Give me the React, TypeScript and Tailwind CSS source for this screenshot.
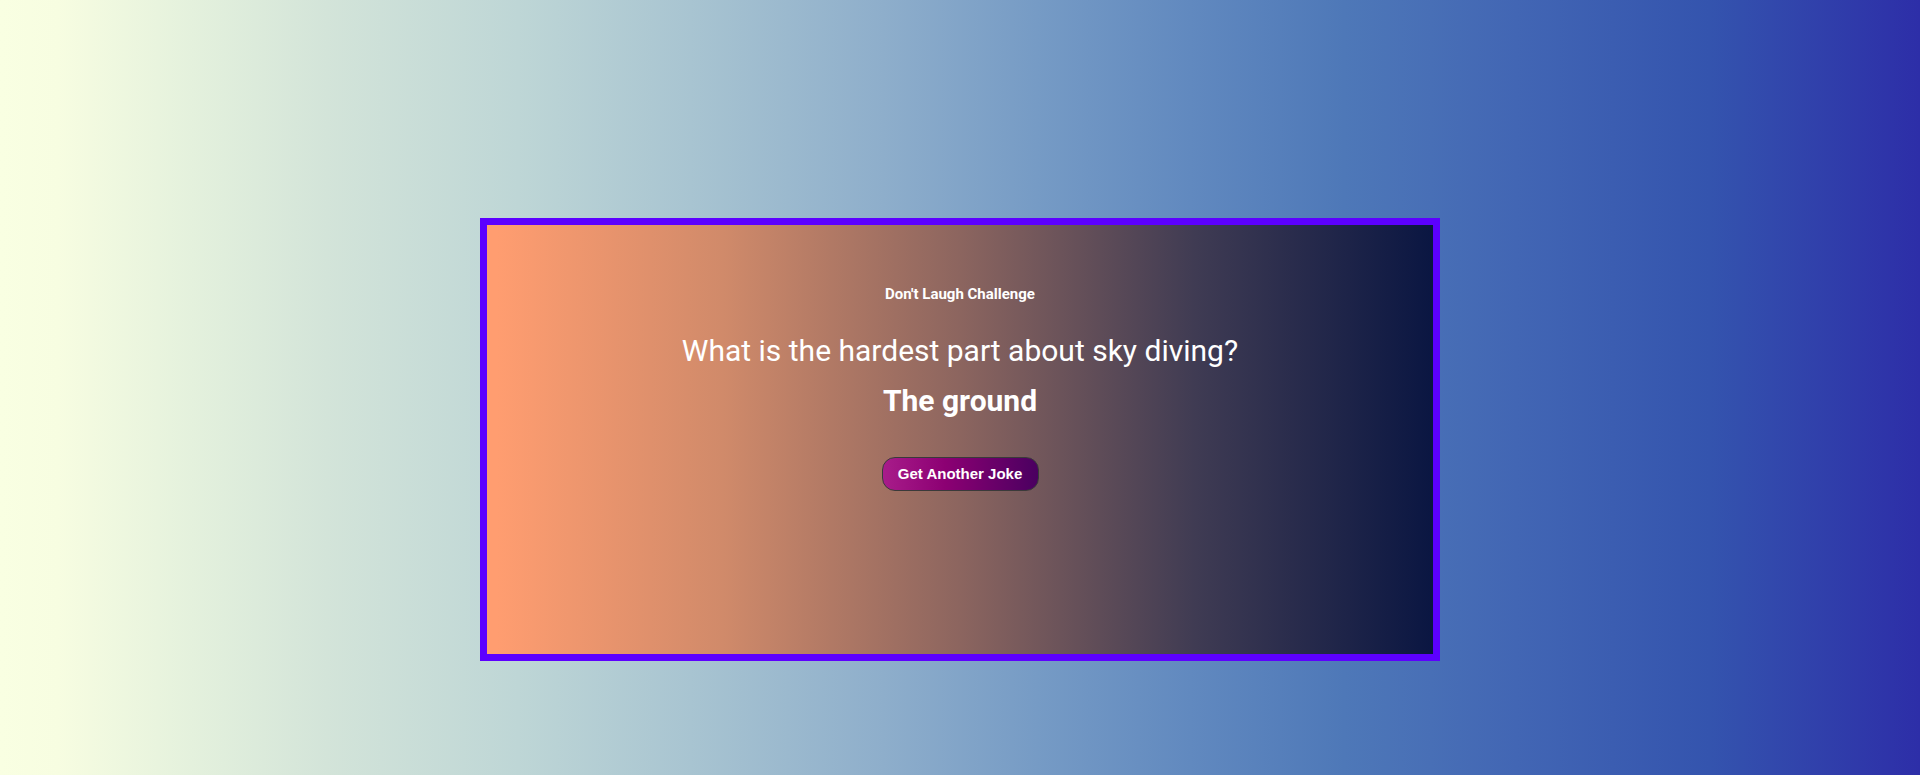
import React, { useState } from "react";

const jokes = [
  { q: "What is the hardest part about sky diving?", a: "The ground" },
  { q: "Why did the scarecrow win an award?", a: "He was outstanding in his field" },
  { q: "What do you call a fake noodle?", a: "An impasta" },
];

function App() {
  const [index, setIndex] = useState(0);
  const joke = jokes[index];

  return (
    <div className="min-h-[775px] w-full bg-[linear-gradient(90deg,#f9ffe2_0%,#f7fde1_3%,#e4f1dd_10%,#d3e4d9_17%,#bed6d6_27%,#a8c4d1_36%,#8eaecb_46%,#769bc5_54%,#6189bf_62%,#4e78b8_70%,#4266b4_79%,#3454ae_89%,#2d2ea8_100%)] flex justify-center pt-[218px] font-['Roboto',sans-serif]">
      <div className="w-[960px] h-[443px] border-[7px] border-[#5c00ff] bg-[linear-gradient(90deg,#ff9d70_0%,#ff9d70_1%,#d08a6a_25%,#8c655f_50%,#3f3b53_75%,#0a1642_100%)] flex flex-col items-center text-white">
        <h3 className="mt-[59px] text-[15px] font-bold leading-[20px]">Don't Laugh Challenge</h3>
        <p className="mt-[29px] text-[30px] leading-[36px]">{joke.q}</p>
        <p className="mt-[14px] text-[30px] font-bold leading-[36px]">{joke.a}</p>
        <button
          onClick={() => setIndex((index + 1) % jokes.length)}
          className="mt-[38px] w-[157px] h-[34px] rounded-[13px] border border-[#3a3a3a] bg-[linear-gradient(90deg,#a81c8a_0%,#8c0073_40%,#4a0060_100%)] text-[15px] font-bold font-['Liberation_Sans',Arial,sans-serif] text-white"
        >
          Get Another Joke
        </button>
      </div>
    </div>
  );
}

export default App;
